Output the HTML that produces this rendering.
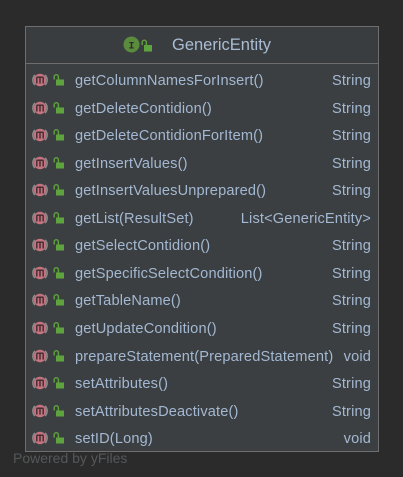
<!DOCTYPE html>
<html><head><style>
body{margin:0;width:403px;height:477px;background:#2b2b2b;position:relative;overflow:hidden;font-family:"Liberation Sans",sans-serif;}
.box{position:absolute;left:25px;top:26px;width:352px;height:424px;background:#3c3f41;border:1px solid #6e6e6e;}
.hdr{position:absolute;left:0;top:0;width:352px;height:36px;border-bottom:1px solid #6e6e6e;background:#3a3d3f;}
.title{position:absolute;left:146px;top:9px;font-size:16.5px;color:#a9bdd4;}
.row{position:absolute;left:0;width:352px;height:20px;font-size:14.6px;letter-spacing:0.15px;color:#a3b8d2;}
.n{position:absolute;left:49px;top:2.5px;white-space:nowrap;}
.t{position:absolute;right:7px;top:2.5px;white-space:nowrap;}
.ic{position:absolute;left:6px;top:2px;}
.lk{position:absolute;left:27px;top:3px;}
.pw{position:absolute;left:13px;top:450px;font-size:14px;color:#555759;}
</style></head><body>
<svg width="0" height="0" style="position:absolute">
<defs>
<g id="m"><path d="M3 3a7 7 0 0 0 0 10" stroke="#8a8a8a" stroke-width="1.6" fill="none"/><path d="M13 3a7 7 0 0 1 0 10" stroke="#8a8a8a" stroke-width="1.6" fill="none"/><circle cx="8" cy="8" r="6.2" fill="#c7737f"/><path d="M4.6 5.2h6.8M4.8 5.2v6.3M8 5.2v6.3M11.2 5.2v6.3" stroke="#3e2b30" stroke-width="1.4" fill="none"/></g>
<g id="l"><path d="M3 6.5h8v6h-8z" fill="#5fa33e"/><path d="M1.2 6.5V3.8a2.1 2.1 0 0 1 4.2 0V6.5" stroke="#5fa33e" stroke-width="1.4" fill="none"/></g>
</defs></svg>
<div class="box">
<div class="hdr">
<svg style="position:absolute;left:97px;top:9px" width="32" height="17"><circle cx="8.5" cy="8.5" r="8" fill="#5b8b3d"/><text x="8.5" y="12.5" font-size="10" font-weight="bold" text-anchor="middle" fill="#2b2b2b" font-family="Liberation Mono">I</text><path d="M21 9h8v6.5h-8z" fill="#5fa33e"/><path d="M19.2 9V6.3a2.1 2.1 0 0 1 4.2 0V9" stroke="#5fa33e" stroke-width="1.4" fill="none"/></svg>
<div class="title">GenericEntity</div>
</div>
<div class="row" style="top:43px"><svg class="ic" width="16" height="16" viewBox="0 0 16 16"><use href="#m"/></svg><svg class="lk" width="12" height="13"><use href="#l"/></svg><span class="n">getColumnNamesForInsert()</span><span class="t">String</span></div>
<div class="row" style="top:71px"><svg class="ic" width="16" height="16" viewBox="0 0 16 16"><use href="#m"/></svg><svg class="lk" width="12" height="13"><use href="#l"/></svg><span class="n">getDeleteContidion()</span><span class="t">String</span></div>
<div class="row" style="top:98px"><svg class="ic" width="16" height="16" viewBox="0 0 16 16"><use href="#m"/></svg><svg class="lk" width="12" height="13"><use href="#l"/></svg><span class="n">getDeleteContidionForItem()</span><span class="t">String</span></div>
<div class="row" style="top:126px"><svg class="ic" width="16" height="16" viewBox="0 0 16 16"><use href="#m"/></svg><svg class="lk" width="12" height="13"><use href="#l"/></svg><span class="n">getInsertValues()</span><span class="t">String</span></div>
<div class="row" style="top:153px"><svg class="ic" width="16" height="16" viewBox="0 0 16 16"><use href="#m"/></svg><svg class="lk" width="12" height="13"><use href="#l"/></svg><span class="n">getInsertValuesUnprepared()</span><span class="t">String</span></div>
<div class="row" style="top:181px"><svg class="ic" width="16" height="16" viewBox="0 0 16 16"><use href="#m"/></svg><svg class="lk" width="12" height="13"><use href="#l"/></svg><span class="n">getList(ResultSet)</span><span class="t">List&lt;GenericEntity&gt;</span></div>
<div class="row" style="top:208px"><svg class="ic" width="16" height="16" viewBox="0 0 16 16"><use href="#m"/></svg><svg class="lk" width="12" height="13"><use href="#l"/></svg><span class="n">getSelectContidion()</span><span class="t">String</span></div>
<div class="row" style="top:236px"><svg class="ic" width="16" height="16" viewBox="0 0 16 16"><use href="#m"/></svg><svg class="lk" width="12" height="13"><use href="#l"/></svg><span class="n">getSpecificSelectCondition()</span><span class="t">String</span></div>
<div class="row" style="top:263px"><svg class="ic" width="16" height="16" viewBox="0 0 16 16"><use href="#m"/></svg><svg class="lk" width="12" height="13"><use href="#l"/></svg><span class="n">getTableName()</span><span class="t">String</span></div>
<div class="row" style="top:291px"><svg class="ic" width="16" height="16" viewBox="0 0 16 16"><use href="#m"/></svg><svg class="lk" width="12" height="13"><use href="#l"/></svg><span class="n">getUpdateCondition()</span><span class="t">String</span></div>
<div class="row" style="top:319px"><svg class="ic" width="16" height="16" viewBox="0 0 16 16"><use href="#m"/></svg><svg class="lk" width="12" height="13"><use href="#l"/></svg><span class="n">prepareStatement(PreparedStatement)</span><span class="t">void</span></div>
<div class="row" style="top:346px"><svg class="ic" width="16" height="16" viewBox="0 0 16 16"><use href="#m"/></svg><svg class="lk" width="12" height="13"><use href="#l"/></svg><span class="n">setAttributes()</span><span class="t">String</span></div>
<div class="row" style="top:374px"><svg class="ic" width="16" height="16" viewBox="0 0 16 16"><use href="#m"/></svg><svg class="lk" width="12" height="13"><use href="#l"/></svg><span class="n">setAttributesDeactivate()</span><span class="t">String</span></div>
<div class="row" style="top:401px"><svg class="ic" width="16" height="16" viewBox="0 0 16 16"><use href="#m"/></svg><svg class="lk" width="12" height="13"><use href="#l"/></svg><span class="n">setID(Long)</span><span class="t">void</span></div>
</div>
<div class="pw">Powered by yFiles</div>
</body></html>
